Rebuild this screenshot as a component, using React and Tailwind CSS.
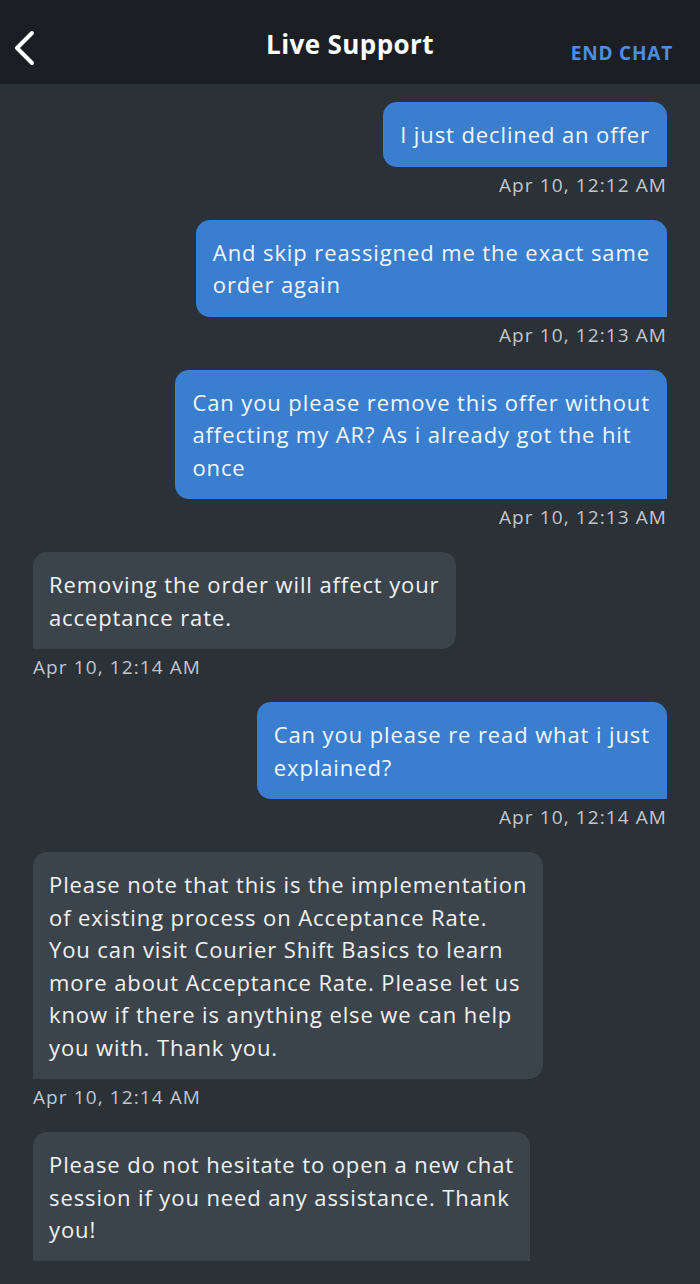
import React from "react";

const font = { fontFamily: "'Open Sans', Lato, sans-serif" };

function UserMsg({ lines, time }) {
  return (
    <div className="flex flex-col items-end">
      <div className="bg-[#3a7ed0] text-[#f4f7fb] rounded-t-[14px] rounded-bl-[14px] rounded-br-none px-[17px] py-[16px] text-[22px] leading-[32.5px] tracking-[0.9px] w-fit">
        {lines.map((l, i) => (
          <div key={i} className="whitespace-nowrap">{l}</div>
        ))}
      </div>
      <div className="mt-[6px] mb-[23px] text-[19px] leading-[24px] text-[#c3c7cb] tracking-[1.1px]">{time}</div>
    </div>
  );
}

function AgentMsg({ lines, time, last }) {
  return (
    <div className="flex flex-col items-start">
      <div className={`bg-[#3c444b] text-[#f1f2f3] rounded-t-[14px] ${last ? "" : "rounded-br-[14px]"} px-[16px] py-[16px] text-[22px] leading-[32.5px] tracking-[0.9px] w-fit`}>
        {lines.map((l, i) => (
          <div key={i} className="whitespace-nowrap">{l}</div>
        ))}
      </div>
      {time && (
        <div className="mt-[6px] mb-[23px] text-[19px] leading-[24px] text-[#c3c7cb] tracking-[1.1px]">{time}</div>
      )}
    </div>
  );
}

export default function App() {
  return (
    <div style={font} className="w-[700px] h-[1284px] bg-[#2a3137] flex flex-col overflow-hidden">
      <div className="h-[84px] bg-[#1b1f24] flex items-center relative shrink-0">
        <div className="absolute left-[12px] top-[30px]">
          <svg width="26" height="36" viewBox="0 0 26 36" fill="none">
            <path d="M20 3 L5 18 L20 33" stroke="#ffffff" strokeWidth="4" strokeLinecap="round" strokeLinejoin="round" />
          </svg>
        </div>
        <div className="w-full text-center text-white font-bold text-[26px] leading-[34px] tracking-[0.4px] mt-[4px]">Live Support</div>
        <div className="absolute right-[27px] top-[39px] text-[#4a8fe3] font-bold text-[19px] leading-[28px] tracking-[0.8px]">END CHAT</div>
      </div>
      <div className="flex-1 overflow-hidden px-[33px] pt-[18px]">
        <UserMsg lines={["I just declined an offer"]} time="Apr 10, 12:12 AM" />
        <UserMsg lines={["And skip reassigned me the exact same", "order again"]} time="Apr 10, 12:13 AM" />
        <UserMsg lines={["Can you please remove this offer without", "affecting my AR? As i already got the hit", "once"]} time="Apr 10, 12:13 AM" />
        <AgentMsg lines={["Removing the order will affect your", "acceptance rate."]} time="Apr 10, 12:14 AM" />
        <UserMsg lines={["Can you please re read what i just", "explained?"]} time="Apr 10, 12:14 AM" />
        <AgentMsg
          lines={[
            "Please note that this is the implementation",
            "of existing process on Acceptance Rate.",
            "You can visit Courier Shift Basics to learn",
            "more about Acceptance Rate. Please let us",
            "know if there is anything else we can help",
            "you with. Thank you.",
          ]}
          time="Apr 10, 12:14 AM"
        />
        <AgentMsg
          last
          lines={["Please do not hesitate to open a new chat", "session if you need any assistance. Thank", "you!"]}
        />
      </div>
      <div className="h-[23px] shrink-0 bg-[#2a3137]" />
    </div>
  );
}
